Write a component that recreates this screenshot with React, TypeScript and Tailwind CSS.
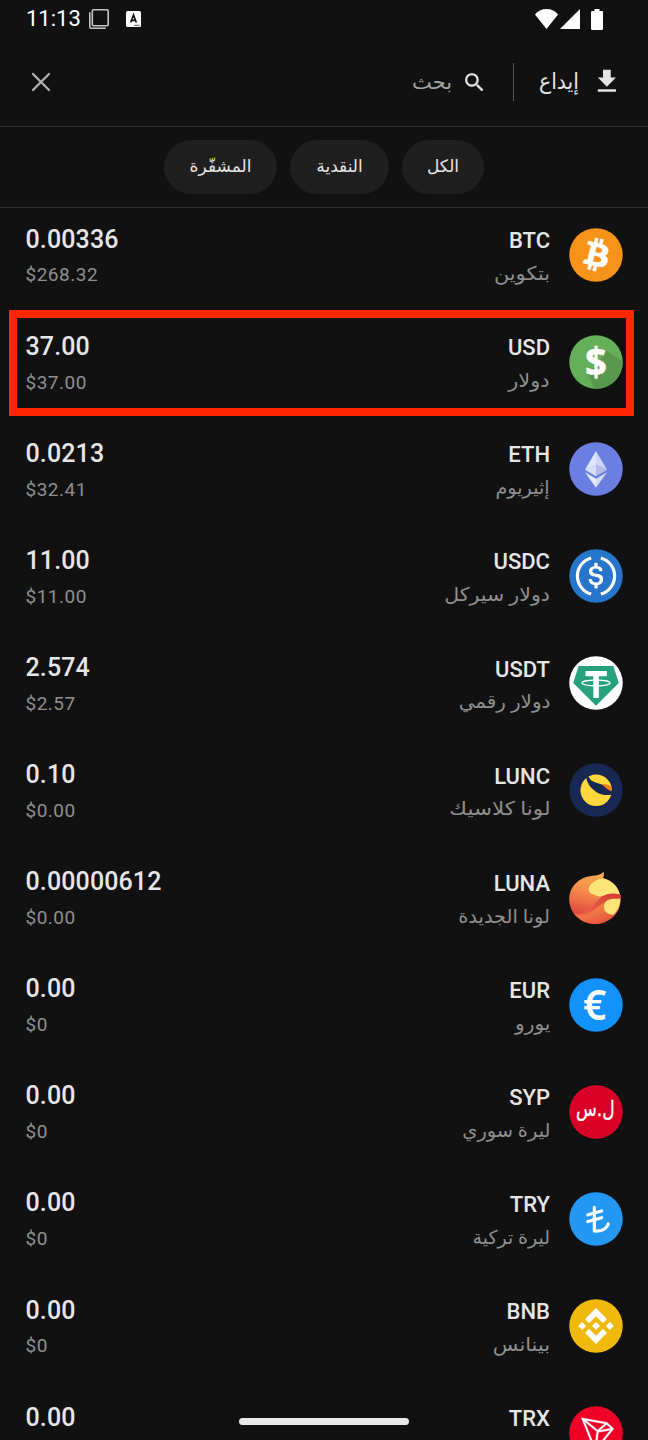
import type { ReactNode } from "react";
import clsx from "clsx";

type Coin = {
    symbol: string;
    name?: string;
    // horizontal stretch for the Arabic label
    fit?: string;
    amount: string;
    value?: string;
    icon: ReactNode;
    highlighted?: boolean;
};

const BtcIcon = () => (
    <>
        <circle cx="16" cy="16" r="16" fill="#f7931a" />
        <path
            fill="#fff"
            stroke="#fff"
            strokeWidth=".4"
            transform="translate(0 -.3)"
            d="M23.189 14.02c.314-2.096-1.283-3.223-3.465-3.975l.708-2.84-1.728-.43-.69 2.765c-.454-.114-.92-.22-1.385-.326l.695-2.783L15.596 6l-.708 2.839c-.376-.086-.746-.17-1.104-.26l.002-.009-2.384-.595-.46 1.846s1.283.294 1.256.312c.7.175.826.638.805 1.006l-.806 3.235c.048.012.11.03.18.057l-.183-.045-1.13 4.532c-.086.212-.303.531-.793.41.018.025-1.256-.313-1.256-.313l-.858 1.978 2.25.561c.418.105.828.215 1.231.318l-.715 2.872 1.727.43.708-2.84c.472.127.93.245 1.378.357l-.706 2.828 1.728.43.715-2.866c2.948.558 5.164.333 6.097-2.333.752-2.146-.037-3.385-1.588-4.192 1.13-.26 1.98-1.003 2.207-2.538zm-3.95 5.538c-.533 2.147-4.148.986-5.32.695l.95-3.805c1.172.293 4.929.872 4.37 3.11zm.535-5.569c-.487 1.953-3.495.96-4.47.717l.86-3.45c.975.243 4.118.696 3.61 2.733z"
        />
    </>
);

const UsdIcon = () => (
    <>
        <defs>
            <clipPath id="usd-clip">
                <circle cx="16" cy="16" r="16" />
            </clipPath>
        </defs>
        <circle cx="16" cy="16" r="16" fill="#65ae5a" />
        <path clipPath="url(#usd-clip)" fill="#5a9850" d="M21 8.5 34 17v17H16l-6-13 7-2z" />
        <text x="16" y="24.4" textAnchor="middle" fontSize="23" fontWeight="700" fill="#fff" stroke="#fff" strokeWidth=".3" className="font-['Open_Sans',sans-serif]">
            $
        </text>
    </>
);

const EthIcon = () => (
    <>
        <circle cx="16" cy="16" r="16" fill="#6b7fe3" />
        <path fill="#fff" fillOpacity=".8" d="M16 5.2 9.4 16.4 16 13.4z" />
        <path fill="#fff" fillOpacity=".67" d="M16 5.2v8.2l6.6 3z" />
        <path fill="#fff" fillOpacity=".74" d="M9.4 16.4 16 20.4v-7z" />
        <path fill="#e3e1ee" fillOpacity=".62" d="M22.6 16.4 16 20.4v-7z" />
        <path fill="#fff" fillOpacity=".86" d="M9.4 17.9 16 27.2v-5.4z" />
        <path fill="#fff" fillOpacity=".72" d="M22.6 17.9 16 27.2v-5.4z" />
    </>
);

const UsdcIcon = () => (
    <>
        <circle cx="16" cy="16" r="16" fill="#2775ca" />
        <g fill="none" stroke="#fff" strokeWidth="1.9">
            <path d="M13.1 5.2a11.2 11.2 0 0 0 0 21.6" />
            <path d="M18.9 5.2a11.2 11.2 0 0 1 0 21.6" />
        </g>
        <path
            fill="#fff"
            transform="translate(16 16) scale(1.06) translate(-16 -16.2)"
            d="M20.022 18.124c0-2.124-1.28-2.852-3.84-3.156-1.828-.243-2.193-.728-2.193-1.578 0-.85.61-1.396 1.828-1.396 1.097 0 1.707.364 2.011 1.275a.458.458 0 00.427.303h.975a.416.416 0 00.427-.425v-.06a3.04 3.04 0 00-2.743-2.489V9.142c0-.243-.183-.425-.487-.486h-.915c-.243 0-.426.182-.487.486v1.396c-1.829.242-2.986 1.456-2.986 2.974 0 2.002 1.218 2.791 3.778 3.095 1.707.303 2.255.668 2.255 1.639 0 .97-.853 1.638-2.011 1.638-1.585 0-2.133-.667-2.316-1.578-.06-.242-.244-.364-.427-.364h-1.036a.416.416 0 00-.426.425v.06c.243 1.518 1.219 2.61 3.23 2.914v1.457c0 .242.183.425.487.485h.915c.243 0 .426-.182.487-.485V21.34c1.829-.303 3.047-1.578 3.047-3.217z"
        />
    </>
);

const UsdtIcon = () => (
    <>
        <circle cx="16" cy="16" r="16" fill="#fff" />
        <path fill="#25a17b" d="M5.6 5.8h20.8L29.6 16 16 29.6 2.4 16z" />
        <path fill="#fff" d="M9.7 8.8h12.8v3.2h-4.8v13h-3.3V12H9.7z" />
        <ellipse cx="16" cy="16" rx="8.4" ry="1.7" fill="none" stroke="#fff" strokeWidth=".75" />
    </>
);

const LuncIcon = () => (
    <>
        <circle cx="16" cy="16" r="16" fill="#172852" />
        <circle cx="16.1" cy="16.2" r="9.4" fill="#ffd83d" />
        <path fill="#172852" d="M9.2 6.600 11.600 8c1 2 2.400 3 4.600 3.600 3.800 1 7.400 2.600 9.800 5l-.5 2.200c-3 .5-6.200.3-8.600-1.200-3.200-2-5.700-4.400-6.500-8.200z" />
        <path fill="#ff7b16" d="M19.800 12.600c2.200-.2 4.400.4 5.400 1.700l.3 2.500c-2.200-.7-4-2-5.700-4.200z" />
    </>
);

const LunaIcon = () => (
    <>
        <defs>
            <linearGradient id="luna-body" x1="0.7" y1="0" x2="0.45" y2="1">
                <stop offset="0" stopColor="#f9b054" />
                <stop offset=".45" stopColor="#f58a4b" />
                <stop offset=".85" stopColor="#e24c42" />
            </linearGradient>
            <linearGradient id="luna-wave" x1="1" y1="0" x2="0" y2="0.6">
                <stop offset="0" stopColor="#cf3a31" />
                <stop offset=".5" stopColor="#e0503e" />
                <stop offset="1" stopColor="#ee6a44" />
            </linearGradient>
            <linearGradient id="luna-foot" x1="0" y1="0" x2=".6" y2="1">
                <stop offset="0" stopColor="#f9a04c" />
                <stop offset="1" stopColor="#e8563f" />
            </linearGradient>
        </defs>
        <path fill="url(#luna-body)" d="M20.4.3c.6 1.300.4 2.500-.2 3.700C26.500 5.500 30.500 11 30.700 16.500 30.900 25 24 31.600 15.600 31.600 7 31.600 0 25.400 0 16.800 0 9.500 5.500 3.700 13 2.800c3.600-.4 5.900-.6 7.400-2.500z" />
        <path fill="#fde57a" d="M19.600 4.300C16 4.900 11.900 7.400 11.600 10.600c-.1 2.800 3.200 3.400 6 4.500 4-.4 6.500-2 12.600-1.400C29.200 9 25.500 5.300 19.600 4.300z" />
        <path fill="url(#luna-wave)" d="M31 14.400c-3-1.500-7-1.600-10.500.2-4.500 2.400-5 5.600-8.500 8.400-2.500 2-5 3-9 2.400 2.500 4 8 3.200 13 .8 4-2.400 4-6.400 8-8 2.500-.8 5-.6 7-1.600z" />
        <path fill="url(#luna-foot)" d="M4.400 26.600C9 27.600 13 25 17 21.500c1.200-1 2.400-2 4-3-1 3.500 1 7 5.300 7.800-3.400 3.700-7 5.200-10.800 5.200-4.200 0-8.200-1.600-11.100-4.900z" />
        <path fill="#fde57a" d="M30.500 16.500c-5-.3-9.300 0-9.700 4-.3 3.400 1.700 5.500 5.700 5.500 2.300-2.300 3.900-5.200 4-9.500z" />
    </>
);

const EurIcon = () => (
    <>
        <circle cx="16" cy="16" r="16" fill="#1292fa" />
        <text x="15.2" y="24.8" textAnchor="middle" fontSize="24.5" fontWeight="600" fill="#fff" className="font-['Noto_Sans',sans-serif]">
            €
        </text>
    </>
);

const SypIcon = () => (
    <>
        <circle cx="16" cy="16" r="16" fill="#d80027" />
        <text
            textAnchor="middle"
            transform="translate(15.6 18.6) scale(1 1.25)"
            fontSize="10.2"
            fill="#fff"
            stroke="#fff"
            strokeWidth=".15"
            direction="rtl"
            className="font-['DejaVu_Sans',sans-serif]"
        >
            ل.س
        </text>
    </>
);

const TryIcon = () => (
    <>
        <circle cx="16" cy="16" r="16" fill="#2497f3" />
        <g fill="none" stroke="#fff" strokeWidth="1.900" strokeLinecap="round" strokeLinejoin="round">
            <path d="M15 9v14.200c4.500.3 7.500-1.500 8.300-4.300" />
            <path d="M11.100 13.500l8.300-2.300" />
            <path d="M11.100 17.500l8.300-2.300" />
        </g>
    </>
);

const BnbIcon = () => (
    <>
        <circle cx="16" cy="16" r="16" fill="#f0b90b" />
        <path
            fill="#fff"
            transform="translate(16 16) scale(1.07) translate(-16 -16)"
            d="M12.116 14.404L16 10.52l3.886 3.886 2.26-2.26L16 6l-6.144 6.144 2.26 2.26zM6 16l2.26-2.26L10.52 16l-2.26 2.26L6 16zm6.116 1.596L16 21.48l3.886-3.886 2.26 2.259L16 26l-6.144-6.144-.003-.003 2.263-2.257zM21.48 16l2.26-2.26L26 16l-2.26 2.26L21.48 16zm-3.188-.002h.002v.002L16 18.294l-2.291-2.29-.004-.004.004-.003.401-.402.195-.195L16 13.706l2.293 2.293z"
        />
    </>
);

const TrxIcon = () => (
    <>
        <circle cx="16" cy="16" r="16" fill="#ef0027" />
        <path
            fill="#fff"
            stroke="#fff"
            strokeWidth=".2"
            transform="translate(-.8 -.9) scale(1.07)"
            d="M21.932 9.913L7.5 7.257l7.595 19.112 10.583-12.894-3.746-3.562zm-.232 1.17l2.208 2.099-6.038 1.093 3.83-3.192zm-5.142 2.973l-6.364-5.278 10.402 1.914-4.038 3.364zm-.453.934l-1.038 8.58L9.472 9.487l6.633 5.502zm.96.455l6.687-1.21-7.67 9.343.983-8.133z"
        />
    </>
);

const COINS: Coin[] = [
    { symbol: "BTC", name: "بتكوين", fit: "scale-x-[1.1]", amount: "0.00336", value: "$268.32", icon: <BtcIcon /> },
    { symbol: "USD", name: "دولار", fit: "scale-x-[1.1]", amount: "37.00", value: "$37.00", icon: <UsdIcon />, highlighted: true },
    { symbol: "ETH", name: "إثيريوم", fit: "scale-x-[1.01]", amount: "0.0213", value: "$32.41", icon: <EthIcon /> },
    { symbol: "USDC", name: "دولار سيركل", fit: "scale-x-[1.08]", amount: "11.00", value: "$11.00", icon: <UsdcIcon /> },
    { symbol: "USDT", name: "دولار رقمي", fit: "scale-x-[1.05]", amount: "2.574", value: "$2.57", icon: <UsdtIcon /> },
    { symbol: "LUNC", name: "لونا كلاسيك", fit: "scale-x-[1.13]", amount: "0.10", value: "$0.00", icon: <LuncIcon /> },
    { symbol: "LUNA", name: "لونا الجديدة", fit: "scale-x-[1.02]", amount: "0.00000612", value: "$0.00", icon: <LunaIcon /> },
    { symbol: "EUR", name: "يورو", fit: "scale-x-[1.06]", amount: "0.00", value: "$0", icon: <EurIcon /> },
    { symbol: "SYP", name: "ليرة سوري", fit: "scale-x-[1.02]", amount: "0.00", value: "$0", icon: <SypIcon /> },
    { symbol: "TRY", name: "ليرة تركية", fit: "scale-x-100", amount: "0.00", value: "$0", icon: <TryIcon /> },
    { symbol: "BNB", name: "بينانس", fit: "scale-x-[1.1]", amount: "0.00", value: "$0", icon: <BnbIcon /> },
    { symbol: "TRX", amount: "0.00", icon: <TrxIcon /> },
];

const FILTERS = [
    { label: "الكل", width: "w-[82px]" },
    { label: "النقدية", width: "w-[99px]" },
    { label: "المشفّرة", width: "w-[113px]" },
];

function StatusBar() {
    return (
        <div dir="ltr" className="flex h-[38px] shrink-0 items-center pl-[26px] pr-[45px]">
            <span className="w-[56px] text-[22px] leading-none text-white">11:13</span>
            <svg width="20" height="20" viewBox="0 0 20 20" className="ml-[7px]" fill="none" stroke="#c4c4c4" strokeWidth="1.6">
                <rect x="3.3" y=".8" width="15.9" height="15.9" rx="1.2" />
                <path d="M.8 3.200v14.800q0 1.200 1.200 1.200h14.800" />
            </svg>
            <svg width="15" height="16" viewBox="0 0 15 16" className="ml-[17px]">
                <rect width="15" height="16" rx="1.5" fill="#fff" />
                <path d="M4.700 11.500l2.800-7.500 2.800 7.500M5.700 9.300h3.600" fill="none" stroke="#111" strokeWidth="1.7" />
                <path d="M8 14.300h5.500" stroke="#555" strokeWidth="1" />
            </svg>
            <div className="ml-auto flex items-center">
                <svg width="23" height="20" viewBox="0 0 23 20" fill="#fff">
                    <path d="M11.500 20 0 5.400C2.800 2 6.700 0 11.500 0S20.200 2 23 5.400z" />
                </svg>
                <svg width="20" height="20" viewBox="0 0 20 20" fill="#fff" className="ml-[2px]">
                    <path d="M20 0v20H0z" />
                </svg>
                <svg width="12" height="21" viewBox="0 0 12 21" fill="#fff" className="ml-[11px]">
                    <path d="M3.500 0h5v2h2.200q1.300 0 1.300 1.300v16.400q0 1.300-1.300 1.300H1.300Q0 21 0 19.700V3.300Q0 2 1.300 2h2.200z" />
                </svg>
            </div>
        </div>
    );
}

function Header() {
    return (
        <header className="flex h-[89px] shrink-0 items-center border-b border-[#2e2e2e] pl-[31px] pr-[26px]">
            <svg width="31" height="31" viewBox="0 0 24 24" fill="#e4e4e4" className="shrink-0">
                <path d="M19.300 8.200h-4V2.200H9.300v6H5.300l7 7 7-7zM5.300 17.200v2h14v-2h-14z" />
            </svg>
            <span className="mr-[12px] w-[40px] shrink-0 origin-right scale-x-[0.93] whitespace-nowrap text-[22px] leading-none text-[#e2e2e2]">إيداع</span>
            <span className="mr-[25px] h-[38px] w-[1.5px] shrink-0 bg-[#555]" />
            <svg width="25" height="25" viewBox="0 0 24 24" fill="#e4e4e4" stroke="#e4e4e4" strokeWidth=".2" className="mr-[26px] shrink-0">
                <path d="M15.5 14h-.79l-.28-.27A6.471 6.471 0 0 0 16 9.500 6.500 6.500 0 1 0 9.500 16c1.610 0 3.090-.59 4.230-1.570l.27.28v.79l5 4.990L20.490 19l-4.990-5zm-6 0C7.010 14 5 11.990 5 9.500S7.010 5 9.500 5 14 7.010 14 9.500 11.990 14 9.500 14z" />
            </svg>
            <span className="mr-[9px] origin-right scale-x-[1.05] whitespace-nowrap text-[20px] leading-none text-[#a2a2a2]">بحث</span>
            <svg width="20" height="20" viewBox="0 0 20 20" className="mr-auto" stroke="#b0b0b0" strokeWidth="2.3" strokeLinecap="round">
                <path d="M2 2l16 16M18 2 2 18" />
            </svg>
        </header>
    );
}

function Filters() {
    return (
        <div className="flex h-[81px] shrink-0 items-center justify-center gap-[13px] border-b border-[#2e2e2e]">
            {FILTERS.map((f) => (
                <button key={f.label} className={clsx("h-[54px] whitespace-nowrap rounded-full bg-[#1f1f1f] text-[17px] text-[#e4e4e4]", f.width)}>
                    {f.label}
                </button>
            ))}
        </div>
    );
}

function CoinRow({ coin }: { coin: Coin }) {
    return (
        <li className="relative flex h-[107.1px] shrink-0 items-start px-[25px]">
            <svg width="54" height="54" viewBox="-0.15 -0.15 32.3 32.3" className="mt-[20px] shrink-0 overflow-visible">
                {coin.icon}
            </svg>
            <div className="mr-[19px] mt-[20.2px] flex flex-col items-start">
                <span className="text-[22px] font-medium leading-[26px] text-[#e6e6e6]">{coin.symbol}</span>
                {coin.name && (
                    <span className={clsx("mt-[5.8px] origin-right whitespace-nowrap text-[19px] leading-[28px] text-[#8f8f8f]", coin.fit)}>{coin.name}</span>
                )}
            </div>
            <div dir="ltr" className="mr-auto mt-[16.6px] flex flex-col items-start pl-[0.5px]">
                <span className="text-[25px] font-medium leading-[30px] tracking-[0.12px] text-[#e6e6e6]">{coin.amount}</span>
                {coin.value && <span className="mt-[8.9px] text-[19px] leading-[24px] tracking-[0.5px] text-[#8f8f8f]">{coin.value}</span>}
            </div>
            {coin.highlighted && <div className="absolute -top-[5px] left-[9px] h-[106px] w-[625px] border-8 border-[#ff2600]" />}
        </li>
    );
}

export default function App() {
    return (
        <div dir="rtl" className="relative flex h-[1440px] w-[648px] flex-col overflow-hidden bg-[#111] font-[Roboto,'DejaVu_Sans',sans-serif]">
            <StatusBar />
            <Header />
            <Filters />
            <ul className="flex flex-col">
                {COINS.map((coin) => (
                    <CoinRow key={coin.symbol} coin={coin} />
                ))}
            </ul>
            {/* Gesture bar */}
            <div className="absolute bottom-[15px] left-[239px] h-[7px] w-[170px] rounded-full bg-[#e8e8e8]" />
        </div>
    );
}
